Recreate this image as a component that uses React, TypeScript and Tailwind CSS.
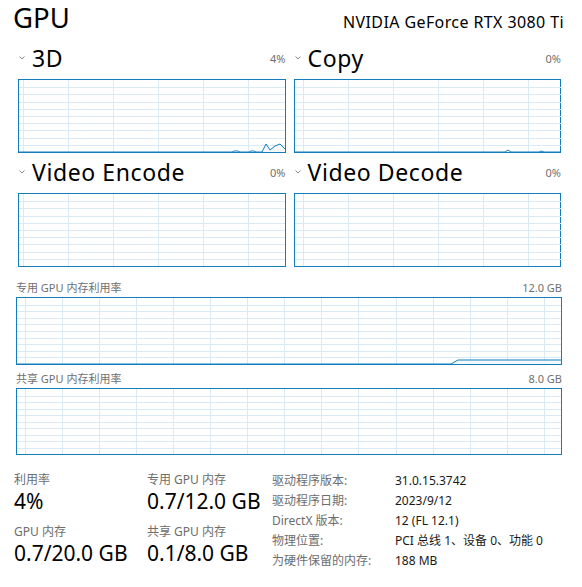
import React from "react";

type ChartProps = {
  w: number;
  h: number;
  spacing: number;
  offset: number;
  data?: string;
};

function Chart({ w, h, spacing, offset, data }: ChartProps) {
  const verts: number[] = [];
  for (let x = offset; x < w; x += spacing) verts.push(Math.round(x));
  const hs: number[] = [];
  for (let i = 1; i < 10; i++) hs.push(Math.round((h * i) / 10));
  return (
    <div className="border border-[#117dbb] bg-white">
      <svg width={w} height={h} className="block">
        {hs.map((y) => (
          <line key={"h" + y} x1={0} x2={w} y1={y + 0.5} y2={y + 0.5} stroke="#d9eaf4" strokeWidth={1} />
        ))}
        {verts.map((x) => (
          <line key={"v" + x} x1={x + 0.5} x2={x + 0.5} y1={0} y2={h} stroke="#d9eaf4" strokeWidth={1} />
        ))}
        {data && (
          <>
            <path d={data + ` L${w},${h} L0,${h} Z`} fill="#f1f6fa" fillOpacity={0.8} stroke="none" />
            <path d={data} fill="none" stroke="#117dbb" strokeWidth={1} />
          </>
        )}
      </svg>
    </div>
  );
}

function Chevron() {
  return (
    <svg width="14" height="8" className="block shrink-0">
      <polyline points="1.5,2.5 4,5 6.5,2.5" fill="none" stroke="#8a8a8a" strokeWidth="1" />
    </svg>
  );
}

function Panel({
  title,
  pct,
  offset,
  data,
}: {
  title: string;
  pct: string;
  offset: number;
  data?: string;
}) {
  return (
    <div className="flex flex-col">
      <div className="flex justify-between h-[39px]">
        <div className="flex items-center pt-[4px] h-[32px]">
          <Chevron />
          <span className="text-[23px] leading-[28px] tracking-[0.6px] text-black">{title}</span>
        </div>
        <div className="pt-[12px] text-[11px] leading-[14px] text-[#707070]">{pct}</div>
      </div>
      <Chart w={266} h={72} spacing={45} offset={offset} data={data} />
    </div>
  );
}

export default function App() {
  return (
    <div className="w-[582px] h-[587px] bg-white overflow-hidden font-['Noto_Sans','Noto_Sans_CJK_SC',sans-serif] text-black">
      <div className="flex items-baseline justify-between pl-[13px] pr-[18px] h-[40px]">
        <div className="text-[27.5px] leading-[36px]">GPU</div>
        <div className="text-[16px] leading-[20px] tracking-[0.4px]">NVIDIA GeForce RTX 3080 Ti</div>
      </div>

      <div className="ml-[18px] w-[543px] grid grid-cols-2 gap-x-[8px] gap-y-[1px]">
        <Panel
          title="3D"
          pct="4%"
          offset={4}
          data="M0,72 L213,72 L215,71 L219,71 L221,72 L230,72 L232,71 L235,71 L237,72 L243,72 L247,64 L251,70 L256,66 L261,64 L266,69"
        />
        <Panel title="Copy" pct="0%" offset={8} data="M0,72 L210,72 L213,70 L216,72 L244,72 L246,71 L249,72 L266,72" />
        <Panel title="Video Encode" pct="0%" offset={4} />
        <Panel title="Video Decode" pct="0%" offset={8} />
      </div>

      <div className="ml-[16px] w-[546px]">
        <div className="flex items-end justify-between h-[30px] pb-[2px] text-[11px] leading-[14px] text-[#707070]">
          <span>专用 GPU 内存利用率</span>
          <span>12.0 GB</span>
        </div>
        <Chart w={544} h={66} spacing={37.05} offset={8} data="M0,66 L434,66 L441,62 L544,62" />
        <div className="flex items-end justify-between h-[23px] pb-[2px] text-[11px] leading-[14px] text-[#707070]">
          <span>共享 GPU 内存利用率</span>
          <span>8.0 GB</span>
        </div>
        <Chart w={544} h={65} spacing={37.05} offset={8} />
      </div>

      <div className="flex pl-[14px] mt-[16px]">
        <div className="w-[133px] flex flex-col">
          <div className="mt-[2px] text-[12px] leading-[14px] text-[#6d6d6d]">利用率</div>
          <div className="text-[21px] leading-[28px]">4%</div>
          <div className="mt-[10px] text-[12px] leading-[14px] text-[#6d6d6d]">GPU 内存</div>
          <div className="text-[21px] leading-[28px]">0.7/20.0 GB</div>
        </div>
        <div className="w-[125px] flex flex-col">
          <div className="mt-[2px] text-[12px] leading-[14px] text-[#6d6d6d]">专用 GPU 内存</div>
          <div className="text-[21px] leading-[28px]">0.7/12.0 GB</div>
          <div className="mt-[10px] text-[12px] leading-[14px] text-[#6d6d6d]">共享 GPU 内存</div>
          <div className="text-[21px] leading-[28px]">0.1/8.0 GB</div>
        </div>
        <div className="grid grid-cols-[123px_auto] text-[12px] leading-[20px]">
          <span className="text-[#6d6d6d]">驱动程序版本:</span>
          <span className="text-[#1a1a1a]">31.0.15.3742</span>
          <span className="text-[#6d6d6d]">驱动程序日期:</span>
          <span className="text-[#1a1a1a]">2023/9/12</span>
          <span className="text-[#6d6d6d]">DirectX 版本:</span>
          <span className="text-[#1a1a1a]">12 (FL 12.1)</span>
          <span className="text-[#6d6d6d]">物理位置:</span>
          <span className="text-[#1a1a1a]">PCI 总线 1、设备 0、功能 0</span>
          <span className="text-[#6d6d6d]">为硬件保留的内存:</span>
          <span className="text-[#1a1a1a]">188 MB</span>
        </div>
      </div>
    </div>
  );
}
